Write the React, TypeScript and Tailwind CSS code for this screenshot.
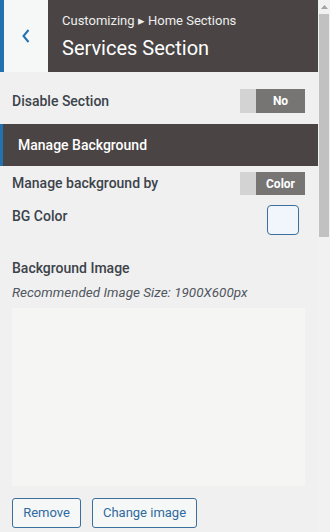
import React from "react";

export default function App() {
  return (
    <div className="flex w-[330px] h-[532px] overflow-hidden bg-[#f0f0f1]" style={{ fontFamily: "Roboto, 'Liberation Sans', sans-serif" }}>
      <div className="w-[318px] h-[532px] flex flex-col overflow-hidden">
        {/* Header */}
        <div className="flex h-[72px] shrink-0">
          <div className="w-[4px] bg-[#2271b1]" />
          <div className="w-[44px] bg-[#f6f7f7] flex items-center justify-center">
            <svg width="10" height="16" viewBox="0 0 10 16" fill="none">
              <path d="M7.5 2 L2.5 8 L7.5 14" stroke="#2271b1" strokeWidth="2" />
            </svg>
          </div>
          <div className="flex-1 bg-[#4a4544] pl-[14px] flex flex-col">
            <div className="mt-[13px] text-[13px] leading-[16px] text-[#eeeeee]">Customizing ▸ Home Sections</div>
            <div className="mt-[7px] text-[20px] leading-[24px] text-white">Services Section</div>
          </div>
        </div>

        {/* Disable Section */}
        <div className="mt-[17px] flex items-center justify-between pl-[12px] pr-[13px] h-[24px]">
          <span className="text-[14px] font-medium text-[#3c434a]">Disable Section</span>
          <div className="flex h-[24px] w-[65px]">
            <div className="w-[16px] bg-[#d3d3d3]" />
            <div className="flex-1 bg-[#767574] text-white text-[12px] font-bold flex items-center justify-center">No</div>
          </div>
        </div>

        {/* Manage Background band */}
        <div className="mt-[11px] h-[42px] flex bg-[#4a4544]">
          <div className="w-[3px] bg-[#2271b1]" />
          <div className="pl-[15px] flex items-center text-[14px] font-medium text-white">Manage Background</div>
        </div>

        {/* Manage background by */}
        <div className="mt-[6px] flex items-center justify-between pl-[12px] pr-[13px] h-[23px]">
          <span className="text-[14px] font-medium text-[#3c434a]">Manage background by</span>
          <div className="flex h-[23px] w-[65px]">
            <div className="w-[16px] bg-[#d3d3d3]" />
            <div className="flex-1 bg-[#767574] text-white text-[12px] font-bold flex items-center justify-center">Color</div>
          </div>
        </div>

        {/* BG Color */}
        <div className="mt-[10px] flex items-start justify-between pl-[12px] pr-[19px]">
          <span className="text-[14px] font-medium text-[#3c434a] leading-[22px]">BG Color</span>
          <div className="w-[32px] h-[30px] rounded-[4px] border border-[#3a6f9e] bg-[#f0f6fc]" />
        </div>

        {/* Background Image */}
        <div className="mt-[24px] pl-[12px] text-[14px] font-medium text-[#3c434a] leading-[18px]">Background Image</div>
        <div className="mt-[7px] pl-[12px] text-[13.5px] italic text-[#50575e] leading-[16px]">Recommended Image Size: 1900X600px</div>

        <div className="mt-[8px] mx-[12px] w-[293px] h-[178px] bg-[#f5f5f3]" />

        <div className="mt-[12px] pl-[12px] flex gap-[11px]">
          <button className="h-[30px] w-[69px] rounded-[3px] border border-[#3a6f9e] bg-[#f6f7f7] text-[13px] text-[#2f6aa0]">Remove</button>
          <button className="h-[30px] w-[105px] rounded-[3px] border border-[#3a6f9e] bg-[#f6f7f7] text-[13px] text-[#2f6aa0]">Change image</button>
        </div>
      </div>

      {/* Scrollbar */}
      <div className="w-[12px] h-[532px] flex flex-col bg-[#f1f1f1]">
        <div className="h-[14px] flex items-center justify-center">
          <svg width="7" height="4" viewBox="0 0 7 4"><path d="M0 4 L3.5 0 L7 4 Z" fill="#a3a3a3" /></svg>
        </div>
        <div className="h-[223px] mx-[1px] bg-[#c1c1c1]" />
      </div>
    </div>
  );
}
